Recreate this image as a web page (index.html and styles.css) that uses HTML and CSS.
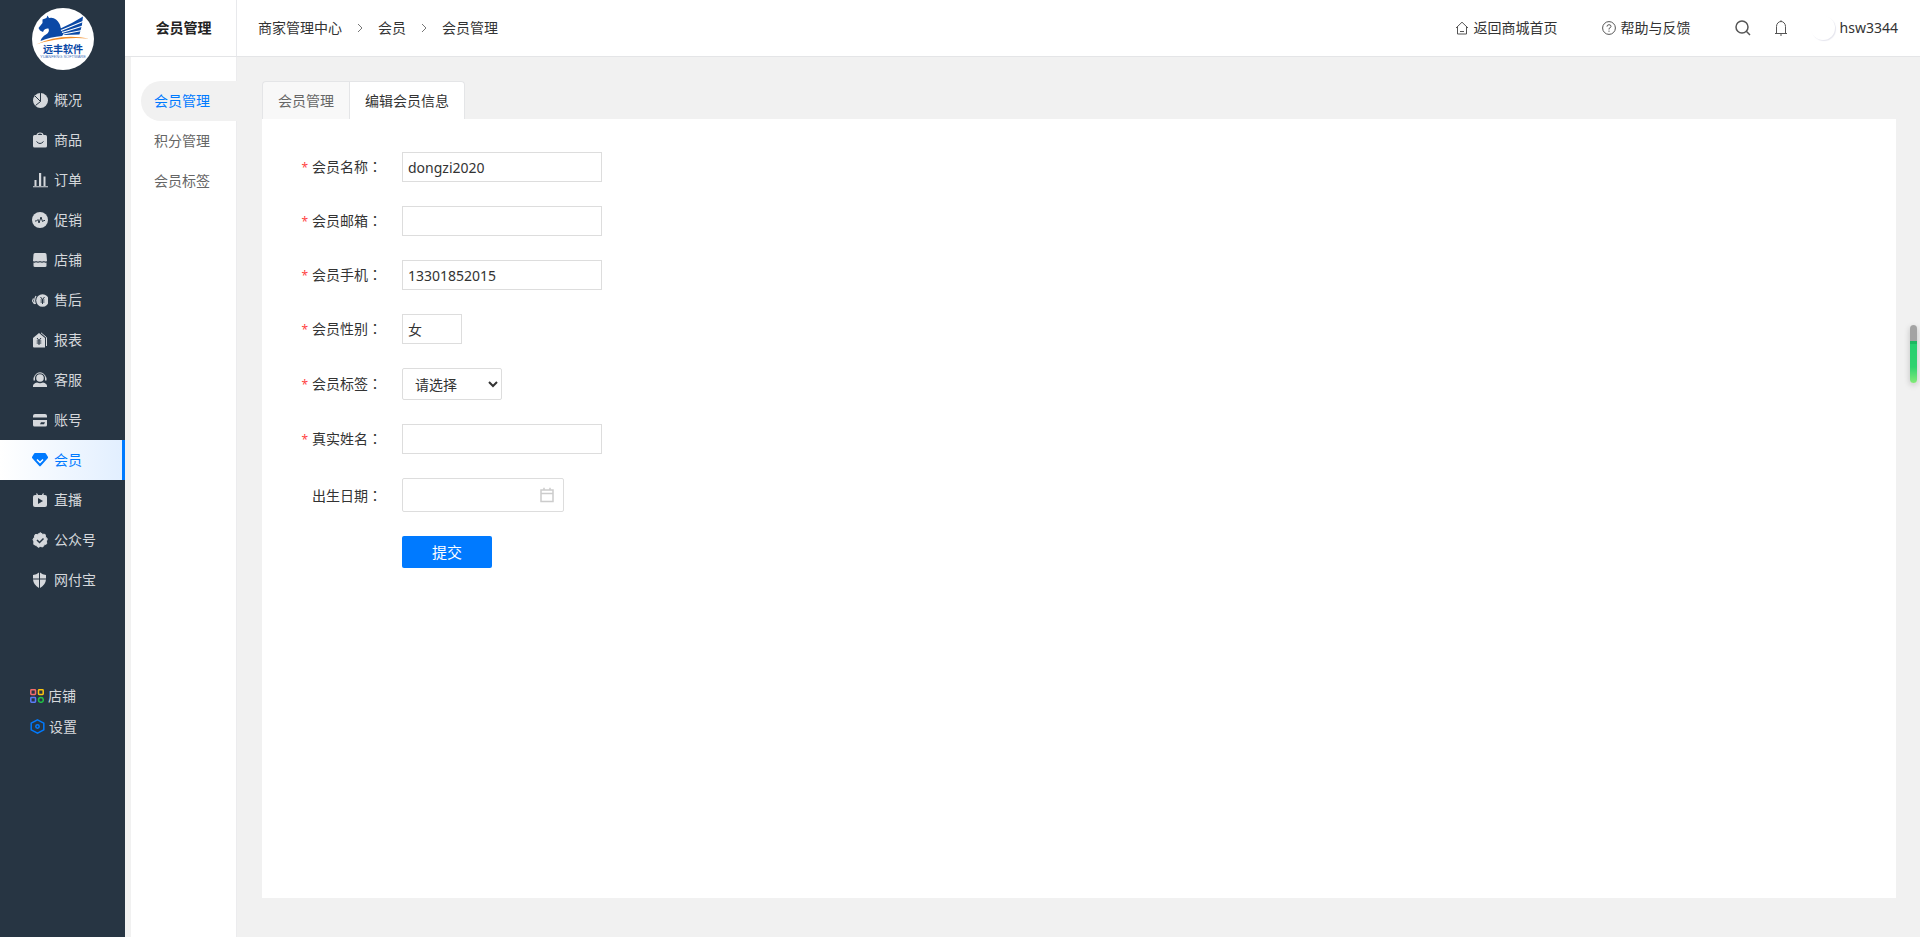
FILE: index.html
```
<!DOCTYPE html>
<html lang="zh-CN">
<head>
  <meta charset="UTF-8" />
  <meta name="viewport" content="width=device-width, initial-scale=1.0" />
  <title>会员管理</title>
  <link rel="stylesheet" href="styles.css">
</head>
<body>

  <aside class="sidebar">
    <a class="logo" href="#" aria-label="远丰软件">
      <svg viewBox="0 0 62 62">
        <circle cx="31" cy="31" r="31" fill="#fff"/>
        <path fill="#0b49a6" d="M15.500 7.500L17 10Q21 9 24 11.500 28 15 28.500 19 29 23 32 25.500L30 28Q18 29 8.500 33 9.500 29 14 26.500 18 24 16.500 20.500 13.500 20 12 22L11 24 8 22.500 6.500 20 10.500 15 10.500 11.500 14.500 10z"/>
        <path fill="#0b49a6" d="M28.500 20.500Q40 15.500 51 8.500 50.500 17 47.500 26.500L32.500 27Z"/>
        <path d="M29 22.500L51 13.500M30 24.500L51 18M31.500 26L50 22.500" stroke="#fff" stroke-width="1.200" fill="none"/>
        <path fill="#f08a24" d="M4 36.500Q28 25 57 30.500 28 28 4 36.500Z"/>
        <text class="logo-cn" x="31" y="45" text-anchor="middle">远丰软件</text>
        <text class="logo-en" x="31" y="50" text-anchor="middle">YUANFENG SOFTWARE</text>
      </svg>
    </a>

    <nav class="menu">
      <a href="#">
        <svg viewBox="0 0 16 16"><circle cx="8.500" cy="8.500" r="7.500" fill="currentColor"/><path class="cut" d="M8.500 .5V9.500L3.500 13.500M8.500 9.500L3 4"/></svg>
        概况
      </a>
      <a href="#">
        <svg viewBox="0 0 16 16"><path d="M5 5V3.500a3 2.500 0 0 1 6 0V5" fill="none" stroke="currentColor" stroke-width="1.200"/><rect x="1" y="3" width="14" height="12.500" rx="1.500" fill="currentColor"/><path class="cut" d="M4.500 9.500q3.500 4 7 0"/></svg>
        商品
      </a>
      <a href="#">
        <svg viewBox="0 0 16 16"><path d="M2.500 8h2v6h-2zM7 1h2.200v13H7zM11.500 4.500h2V14h-2zM1 14.200h15v1H1z" fill="currentColor"/></svg>
        订单
      </a>
      <a href="#">
        <svg viewBox="0 0 16 16"><circle cx="8" cy="8" r="8" fill="currentColor"/><path class="cut" d="M3 9h1.500L6 7.500 7 11l2-6 1.500 4.500L12 8.500h1"/></svg>
        促销
      </a>
      <a href="#">
        <svg viewBox="0 0 16 16"><path d="M3 1h10q1.500 0 1.500 1.500L15 9q-1.500 1-3 0-2 1-4 0-2 1-4 0-1.500 1-3 0l.5-6.500Q1.500 1 3 1zM1.500 10.500q1.500.5 2.500-.3 2 .9 4 0 2 .9 4 0 1 .8 2.500.3v3.500q0 1-1.500 1H3q-1.500 0-1.500-1z" fill="currentColor"/></svg>
        店铺
      </a>
      <a href="#">
        <svg viewBox="0 0 16 16"><circle cx="10.500" cy="8.500" r="6.300" fill="currentColor"/><path d="M4 4q-2.500 4-.5 8M1.500 6.500L.5 9l2 3" fill="none" stroke="currentColor" stroke-width="1.200"/><path class="cut" d="M8.500 5l2 2.500 2-2.500M10.500 7.500V12M8.500 8h4M8.500 10h4"/></svg>
        售后
      </a>
      <a href="#">
        <svg viewBox="0 0 16 16"><path d="M7 1l6 5v9.500H2q-1 0-1-1V6z" fill="currentColor"/><path d="M9 .8l5.500 4.700V14" fill="none" stroke="currentColor"/><path class="cut" d="M5 6l2 2.500L9 6M7 8.500V13M4.700 9h4.600M4.700 11h4.600"/></svg>
        报表
      </a>
      <a href="#">
        <svg viewBox="0 0 16 16"><circle cx="8" cy="6" r="3.800" fill="currentColor"/><path d="M2.500 8V6a5.500 5.200 0 0 1 11 0v2" fill="none" stroke="currentColor"/><path d="M1.500 5.500h1.500v3H1.500zM13 5.500h1.500v3H13zM1 15v-1q0-2.500 4-3.500 3 1.500 6 0 4 1 4 3.500v1z" fill="currentColor"/></svg>
        客服
      </a>
      <a href="#">
        <svg viewBox="0 0 16 16"><path d="M3 2h10q2 0 2 2v1.500H1V4q0-2 2-2zM1 8h14v5q0 1.500-1.500 1.500h-11Q1 14.500 1 13z" fill="currentColor"/><path d="M9 10.200h4l-1 2H8z" fill="#273543"/></svg>
        账号
      </a>
      <a href="#" class="active">
        <svg viewBox="0 0 16 16"><path d="M3 1h10q.6 0 1 .7L16 5q.2.600-.3 1.200L8.700 14q-.7.800-1.400 0L.3 6.200Q-.2 5.600 0 5l2-3.300Q2.400 1 3 1z" fill="currentColor"/><path d="M5 7.500l3 3 3-3" fill="none" stroke="#fff" stroke-width="1.500"/></svg>
        会员
      </a>
      <a href="#">
        <svg viewBox="0 0 16 16"><path d="M4.500 1.500L6 4M11.500 1.500L10 4" stroke="currentColor" stroke-width="1.300"/><rect x="1" y="3" width="14" height="12" rx="2" fill="currentColor"/><path d="M6 6l5 3-5 3z" fill="#273543"/></svg>
        直播
      </a>
      <a href="#">
        <svg viewBox="0 0 16 16"><path d="M8.500.7l2 1.500 2.600.2.500 2.500 1.700 2-.8 2.300.2 2.600-2.400 1-1.500 2.100-2.500-.4-2.300.8-1.800-1.900-2.400-1 .1-2.600L1 7.500l1.400-2.200.6-2.600 2.600-.3z" fill="currentColor" stroke="currentColor" stroke-linejoin="round"/><path class="cut thick" d="M5 8l2.500 2.500 4-4"/></svg>
        公众号
      </a>
      <a href="#">
        <svg viewBox="0 0 16 16"><path d="M7 .5v6H1V3q3.500-.5 6-2.500zM8 .5Q10.500 2.500 14 3v3.500H8zM1 7.500h6V16Q1.500 13 1 7.500zM8 7.500h6Q13.500 13 8 16z" fill="currentColor"/></svg>
        网付宝
      </a>
    </nav>

    <nav class="menu-bottom">
      <a href="#">
        <svg viewBox="0 0 14 14" width="14" height="14" fill="none" stroke-width="1.500"><rect x=".8" y=".8" width="4.700" height="4.700" rx=".7" stroke="#f56c6c"/><rect x="8.500" y=".8" width="4.700" height="4.700" rx=".7" stroke="#fbc40f"/><rect x=".8" y="8.500" width="4.700" height="4.700" rx=".7" stroke="#5b7cf7"/><circle cx="10.900" cy="10.900" r="2.400" stroke="#22c046"/></svg>
        店铺
      </a>
      <a href="#">
        <svg viewBox="0 0 15 15" width="15" height="15" fill="none" stroke="#007aff" stroke-width="1.500"><path d="M7.500.9l6.300 3.300v6.600l-6.300 3.300-6.300-3.300V4.200z"/><circle cx="7.500" cy="7.500" r="1.700"/></svg>
        设置
      </a>
    </nav>
  </aside>

  <div class="main">
    <header class="header">
      <div class="module">会员管理</div>
      <nav class="breadcrumb">
        <a href="#">商家管理中心</a>
        <svg viewBox="0 0 12 12"><path d="M4 2l4 4-4 4"/></svg>
        <a href="#">会员</a>
        <svg viewBox="0 0 12 12"><path d="M4 2l4 4-4 4"/></svg>
        <a href="#">会员管理</a>
      </nav>
      <div class="tools">
        <a href="#" class="home">
          <svg viewBox="0 0 14 14" width="14" height="14"><path d="M1 7l6-5.800L13 7M2.500 5.800V13h9V5.800M5 10.500h4"/></svg>
          返回商城首页
        </a>
        <a href="#" class="help">
          <svg viewBox="0 0 14 14" width="14" height="14"><circle cx="7" cy="7" r="6.400"/><path d="M5 5.600Q5 3.700 7 3.700t2 1.700Q9 6.600 7 7.500v1M7 9.600v1.200"/></svg>
          帮助与反馈
        </a>
        <button type="button" class="search" aria-label="搜索">
          <svg viewBox="0 0 16 16" width="16" height="16"><circle cx="7" cy="7" r="6"/><path d="M11.300 11.300L15 15"/></svg>
        </button>
        <button type="button" class="bell" aria-label="消息">
          <svg viewBox="0 0 16 16" width="16" height="16"><path d="M2 13.500h12M3.500 13.500V6.500a4.500 5 0 0 1 9 0v7M8 .3v1.200M7 15h2"/></svg>
        </button>
        <a href="#" class="user"><span class="avatar"></span>hsw3344</a>
      </div>
    </header>

    <div class="body">
      <nav class="submenu">
        <a href="#" class="active">会员管理</a>
        <a href="#">积分管理</a>
        <a href="#">会员标签</a>
      </nav>

      <main class="content">
        <div class="tabs">
          <a href="#">会员管理</a>
          <a href="#" class="active">编辑会员信息</a>
        </div>
        <form class="panel">
          <div class="row">
            <label for="name"><i>*</i>会员名称<span lang="zh-TW">：</span></label>
            <input type="text" id="name" value="dongzi2020">
          </div>
          <div class="row">
            <label for="email"><i>*</i>会员邮箱<span lang="zh-TW">：</span></label>
            <input type="text" id="email">
          </div>
          <div class="row">
            <label for="mobile"><i>*</i>会员手机<span lang="zh-TW">：</span></label>
            <input type="text" id="mobile" value="13301852015">
          </div>
          <div class="row">
            <label for="sex"><i>*</i>会员性别<span lang="zh-TW">：</span></label>
            <input type="text" id="sex" class="short" value="女">
          </div>
          <div class="row">
            <label for="tag"><i>*</i>会员标签<span lang="zh-TW">：</span></label>
            <select id="tag"><option>请选择</option></select>
          </div>
          <div class="row">
            <label for="realname"><i>*</i>真实姓名<span lang="zh-TW">：</span></label>
            <input type="text" id="realname">
          </div>
          <div class="row">
            <label for="birthday">出生日期<span lang="zh-TW">：</span></label>
            <div class="date">
              <input type="text" id="birthday">
              <svg viewBox="0 0 16 16" width="16" height="16"><path d="M2 3h12v11.500H2zM2 6.500h12M5 .8V3M11 .8V3"/></svg>
            </div>
          </div>
          <div class="row submit">
            <button type="submit">提交</button>
          </div>
        </form>
      </main>
    </div>
  </div>

  <div class="meter"></div>

</body>
</html>
```
FILE: styles.css
```
* { box-sizing: border-box; margin: 0; padding: 0; }

body {
  display: flex;
  min-height: 100vh;
  background: #f1f1f1;
  font: 14px/20px "Noto Sans", "Noto Sans CJK SC", sans-serif;
  color: #333;
}

a { color: inherit; text-decoration: none; }

svg { flex: none; display: block; }

/* sidebar */
.sidebar {
  flex: none;
  width: 125px;
  background: #273543;
  color: #d5d8dc;
}

.logo {
  display: block;
  width: 62px;
  margin: 8px auto 10px;
}

.logo svg { width: 62px; height: 62px; }

.logo-cn {
  font: bold 10px "Noto Sans CJK SC", sans-serif;
  fill: #0b49a6;
}

.logo-en {
  font: 4px "Liberation Sans", sans-serif;
  fill: #4a78c0;
}

.menu a {
  display: flex;
  align-items: center;
  gap: 6px;
  height: 40px;
  padding-left: 32px;
}

.menu svg { width: 16px; height: 16px; }

.menu a.active {
  color: #007aff;
  background: linear-gradient(to right, #fff, #e2efff);
  border-right: 3px solid #007aff;
}

.cut {
  fill: none;
  stroke: #273543;
  stroke-width: 1;
}

.cut.thick { stroke-width: 1.5; }

.menu-bottom {
  margin-top: 80px;
  padding-left: 30px;
}

.menu-bottom a {
  display: flex;
  align-items: center;
  gap: 4px;
  height: 31px;
}

/* header */
.main {
  flex: 1;
  display: flex;
  flex-direction: column;
  min-width: 0;
}

.header {
  display: flex;
  align-items: center;
  height: 57px;
  background: #fff;
  border-bottom: 1px solid #e4e5e7;
}

.module {
  width: 112px;
  padding-left: 6px;
  line-height: 56px;
  text-align: center;
  font-weight: bold;
  color: #222;
  border-right: 1px solid #e8e9ec;
}

.breadcrumb {
  display: flex;
  align-items: center;
  gap: 12px;
  padding-left: 21px;
}

.breadcrumb svg {
  width: 12px;
  height: 12px;
  fill: none;
  stroke: #777;
}

.tools {
  display: flex;
  align-items: center;
  margin-left: auto;
  padding-right: 22px;
}

.tools a {
  display: flex;
  align-items: center;
  gap: 5px;
}

.tools svg {
  fill: none;
  stroke: #555;
}

.tools button {
  border: none;
  background: none;
  cursor: pointer;
}

.help { margin: 0 44px; }

.search { margin-right: 22px; }

.search svg { stroke-width: 1.5; }

.bell { margin-right: 22px; }

.avatar {
  width: 24px;
  height: 24px;
  border-radius: 50%;
  box-shadow: 1px 1px 1px #e6e6ee;
}

/* second level menu */
.body {
  flex: 1;
  display: flex;
}

.submenu {
  flex: none;
  width: 106px;
  margin-left: 6px;
  padding: 24px 0 0 10px;
  background: #fff;
  border-right: 1px solid #ececee;
  color: #666;
}

.submenu a {
  display: block;
  padding-left: 13px;
  line-height: 40px;
}

.submenu a.active {
  margin-right: -1px;
  color: #007aff;
  background: #f1f1f1;
  border-radius: 20px 0 0 20px;
}

/* content */
.content {
  flex: 1;
  display: flex;
  flex-direction: column;
  padding: 24px 24px 39px 25px;
}

.tabs { display: flex; }

.tabs a {
  padding: 0 15px;
  line-height: 37px;
  color: #666;
  background: #f8f8f8;
  border: 1px solid #e4e5e7;
  border-width: 1px 0 0 1px;
  border-radius: 4px 0 0 0;
}

.tabs a.active {
  color: #333;
  background: #fff;
  border-right-width: 1px;
  border-radius: 0 4px 0 0;
}

.panel {
  flex: 1;
  padding-top: 33px;
  background: #fff;
}

.row {
  display: flex;
  align-items: center;
  gap: 20px;
  margin-bottom: 24px;
}

.row label {
  width: 120px;
  text-align: right;
}

.row label i {
  margin-right: 4px;
  font-style: normal;
  font-size: 12px;
  color: #f44;
}

/* full-width colon centred in its box */
.row label span { font-family: "Noto Sans CJK TC", sans-serif; }

.row input,
.row select {
  height: 30px;
  padding: 0 5px;
  border: 1px solid #ddd;
  background: #fff;
  font: inherit;
  color: #333;
  outline: none;
}

.row input { width: 200px; }

.row input.short { width: 60px; }

.row select {
  width: 100px;
  height: 32px;
  padding: 0 8px;
  border-radius: 2px;
}

.date {
  display: flex;
  align-items: center;
  width: 162px;
  height: 34px;
  padding-right: 8px;
  border: 1px solid #ddd;
  border-radius: 2px;
}

.date input {
  flex: 1;
  min-width: 0;
  border: none;
}

.date svg {
  fill: none;
  stroke: #ccc;
  stroke-width: 1.5;
}

.submit { padding-left: 140px; }

.submit button {
  width: 90px;
  height: 32px;
  border: none;
  border-radius: 2px;
  background: #007aff;
  color: #fff;
  font: inherit;
  font-size: 15px;
  cursor: pointer;
}

/* floating meter over the page's right edge */
.meter {
  position: fixed;
  top: 325px;
  right: 3px;
  width: 7px;
  height: 58px;
  border-radius: 4px;
  background: linear-gradient(#a3a3a3 16px, #1cb862 16px, #1cb862 19px, #25cf70 19px, #2ed36f 42px, #83ea78);
  box-shadow: 0 2px 6px rgba(0, 0, 0, 0.2);
}
```
